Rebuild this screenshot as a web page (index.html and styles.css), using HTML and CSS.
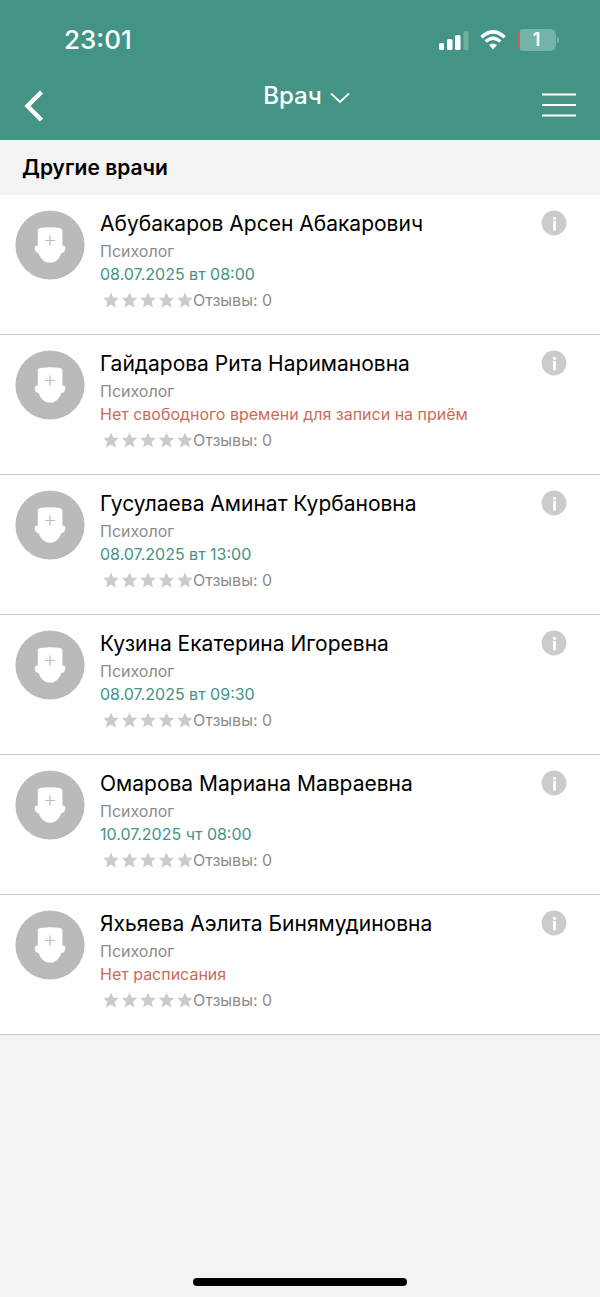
FILE: index.html
```html
<!DOCTYPE html>
<html lang="ru">
<head>
<meta charset="utf-8">
<meta name="viewport" content="width=device-width, initial-scale=1">
<title>Врач</title>
<link rel="stylesheet" href="styles.css">
</head>
<body>
<svg class="defs" aria-hidden="true">
  <symbol id="avatar" viewBox="0 0 70 70">
    <circle cx="35" cy="35" r="34.600" fill="#bababa"/>
    <path fill="#fff" d="M22.800 20.500Q22.800 18.300 25 17.900Q35 16.600 45 17.900Q47.400 18.300 47.400 20.500V35.500Q50.500 35.500 50.300 38.500Q50 42.500 46.500 43Q43 52.800 35 52.800Q27 52.800 23.500 43Q20 42.500 19.700 38.500Q19.500 35.500 22.800 35.500Z"/>
    <path stroke="#bababa" stroke-width="1.200" d="M35 25.500v10M30 30.500h10"/>
  </symbol>
  <symbol id="stars" viewBox="0 0 90 16">
    <g fill="#cbcbcb">
      <path id="star" d="M8 0.500L10.200 5.600L15.800 6L11.600 9.700L13 15.400L8 12.400L3 15.400L4.400 9.700L0.200 6L5.800 5.600Z"/>
      <use href="#star" x="18.500"/><use href="#star" x="37"/><use href="#star" x="55.500"/><use href="#star" x="74"/>
    </g>
  </symbol>
  <symbol id="info" viewBox="0 0 26 26">
    <circle cx="13" cy="13" r="12.400" fill="#cbcbcb"/>
    <circle cx="13.500" cy="8.400" r="1.600" fill="#fff"/>
    <path stroke="#fff" stroke-width="2.800" d="M13.500 11V20.500"/>
  </symbol>
</svg>

<header class="header">
  <div class="status">
    <span class="clock">23:01</span>
    <span class="indicators">
      <svg class="signal" viewBox="0 0 30 20" aria-label="Сигнал">
        <g fill="#fff"><rect y="13" width="5" height="7" rx="1.500"/><rect x="8" y="9" width="5.500" height="11" rx="1.500"/><rect x="16" y="5" width="5.500" height="15" rx="1.500"/><rect x="24.500" y="1" width="5" height="19" rx="1.500" opacity=".25"/></g>
      </svg>
      <svg class="wifi" viewBox="0 0 26 20" aria-label="Wi-Fi">
        <g fill="none" stroke="#fff" stroke-width="3.400"><path d="M1.400 7.200Q13 -3.400 24.600 7.200"/><path d="M5.700 11.600Q13 5 20.300 11.600"/></g>
        <path fill="#fff" d="M9 15Q13 11.800 17 15L13 19.500Z"/>
      </svg>
      <span class="battery">1</span>
    </span>
  </div>
  <nav class="nav">
    <button class="nav-button" type="button" aria-label="Назад">
      <svg class="back" viewBox="0 0 20 32"><path fill="none" stroke="#fff" stroke-width="4.500" d="M17.500 2L3.500 16L17.500 30"/></svg>
    </button>
    <button class="nav-title" type="button">Врач
      <svg class="chevron" viewBox="0 0 20 12"><path fill="none" stroke="#fff" stroke-width="1.800" stroke-linecap="round" d="M1.500 2L10 10L18.500 2"/></svg>
    </button>
    <button class="nav-button nav-menu" type="button" aria-label="Меню">
      <svg class="menu" viewBox="0 0 34 24"><path stroke="#fff" stroke-width="2" d="M0 1.500H34M0 12H34M0 22.500H34"/></svg>
    </button>
  </nav>
</header>

<main class="main">
  <h1 class="section-title">Другие врачи</h1>
  <ul class="doctors">
    <li class="doctor">
      <svg class="avatar"><use href="#avatar"/></svg>
      <div class="details">
        <h2 class="name">Абубакаров Арсен Абакарович</h2>
        <p class="role">Психолог</p>
        <p class="slot">08.07.2025 вт 08:00</p>
        <p class="reviews"><svg class="stars"><use href="#stars"/></svg>Отзывы: 0</p>
      </div>
      <button class="info" type="button" aria-label="Информация"><svg><use href="#info"/></svg></button>
    </li>
    <li class="doctor">
      <svg class="avatar"><use href="#avatar"/></svg>
      <div class="details">
        <h2 class="name">Гайдарова Рита Наримановна</h2>
        <p class="role">Психолог</p>
        <p class="slot none">Нет свободного времени для записи на приём</p>
        <p class="reviews"><svg class="stars"><use href="#stars"/></svg>Отзывы: 0</p>
      </div>
      <button class="info" type="button" aria-label="Информация"><svg><use href="#info"/></svg></button>
    </li>
    <li class="doctor">
      <svg class="avatar"><use href="#avatar"/></svg>
      <div class="details">
        <h2 class="name">Гусулаева Аминат Курбановна</h2>
        <p class="role">Психолог</p>
        <p class="slot">08.07.2025 вт 13:00</p>
        <p class="reviews"><svg class="stars"><use href="#stars"/></svg>Отзывы: 0</p>
      </div>
      <button class="info" type="button" aria-label="Информация"><svg><use href="#info"/></svg></button>
    </li>
    <li class="doctor">
      <svg class="avatar"><use href="#avatar"/></svg>
      <div class="details">
        <h2 class="name">Кузина Екатерина Игоревна</h2>
        <p class="role">Психолог</p>
        <p class="slot">08.07.2025 вт 09:30</p>
        <p class="reviews"><svg class="stars"><use href="#stars"/></svg>Отзывы: 0</p>
      </div>
      <button class="info" type="button" aria-label="Информация"><svg><use href="#info"/></svg></button>
    </li>
    <li class="doctor">
      <svg class="avatar"><use href="#avatar"/></svg>
      <div class="details">
        <h2 class="name">Омарова Мариана Мавраевна</h2>
        <p class="role">Психолог</p>
        <p class="slot">10.07.2025 чт 08:00</p>
        <p class="reviews"><svg class="stars"><use href="#stars"/></svg>Отзывы: 0</p>
      </div>
      <button class="info" type="button" aria-label="Информация"><svg><use href="#info"/></svg></button>
    </li>
    <li class="doctor">
      <svg class="avatar"><use href="#avatar"/></svg>
      <div class="details">
        <h2 class="name">Яхьяева Аэлита Бинямудиновна</h2>
        <p class="role">Психолог</p>
        <p class="slot none">Нет расписания</p>
        <p class="reviews"><svg class="stars"><use href="#stars"/></svg>Отзывы: 0</p>
      </div>
      <button class="info" type="button" aria-label="Информация"><svg><use href="#info"/></svg></button>
    </li>
  </ul>
</main>
<footer class="footer"><div class="home-bar"></div></footer>
</body>
</html>
```
FILE: styles.css
```css
* { box-sizing: border-box; }
body {
  display: flex;
  flex-direction: column;
  min-height: 100vh;
  margin: 0;
  background: #f3f3f3;
  color: #000;
  font-family: Inter, "Liberation Sans", sans-serif;
}
h1, h2, p, ul { margin: 0; padding: 0; }
button {
  padding: 0;
  border: 0;
  background: none;
  color: inherit;
  font: inherit;
}
svg { display: block; flex: none; }
.defs { position: absolute; width: 0; height: 0; }

.header { background: #439485; color: #fff; }
.status {
  display: flex;
  align-items: center;
  justify-content: space-between;
  height: 80px;
  padding: 0 41px 0 64px;
}
.clock { font-size: 26px; font-weight: 500; line-height: 32px; }
.indicators { display: flex; align-items: center; gap: 11px; }
.signal { width: 30px; height: 20px; }
.wifi { width: 26px; height: 20px; }
.battery {
  position: relative;
  width: 39px;
  height: 22px;
  margin-right: 3px;
  border-radius: 6px;
  background: linear-gradient(90deg, #b5695a 3px, #73b3a8 3px);
  font-size: 18px;
  font-weight: 600;
  line-height: 22px;
  text-align: center;
}
.battery::after {
  content: "";
  position: absolute;
  top: 8px;
  right: -3px;
  width: 2px;
  height: 6px;
  border-radius: 0 2px 2px 0;
  background: #73b3a8;
}
.nav {
  display: grid;
  grid-template-columns: 1fr auto 1fr;
  align-items: start;
  height: 60px;
  padding: 0 24px;
}
.nav-button { justify-self: start; padding-top: 10px; }
.nav-menu { justify-self: end; padding-top: 13px; }
.back { width: 20px; height: 32px; }
.menu { width: 34px; height: 24px; }
.nav-title {
  display: flex;
  align-items: center;
  gap: 8px;
  padding-left: 13px;
  font-size: 24px;
  font-weight: 500;
  line-height: 32px;
}
.chevron { width: 20px; height: 12px; margin-top: 4px; }

.main { flex: 1; }
.section-title {
  padding: 14px 22px 13px;
  font-size: 21px;
  font-weight: 600;
  line-height: 28px;
}
.doctors { list-style: none; background: #fff; }
.doctor {
  display: flex;
  align-items: flex-start;
  gap: 15px;
  min-height: 140px;
  padding: 15px 33px 15px 15px;
  border-bottom: 1px solid #c8c8c8;
}
.avatar { width: 70px; height: 70px; }
.details { flex: 1; }
.name { font-size: 21px; font-weight: 400; line-height: 28px; }
.role, .slot, .reviews { color: #8c8c8c; font-size: 16px; line-height: 24px; }
.role { padding-top: 1px; }
.slot { color: #439485; line-height: 22px; }
.slot.none { color: #cb6b5b; }
.reviews { display: flex; align-items: center; padding: 3px 0 0 3px; }
.stars { width: 90px; height: 16px; }
.info svg { width: 26px; height: 26px; }

.footer { display: flex; justify-content: center; padding: 11px; }
.home-bar { width: 214px; height: 8px; border-radius: 4px; background: #000; }
```
